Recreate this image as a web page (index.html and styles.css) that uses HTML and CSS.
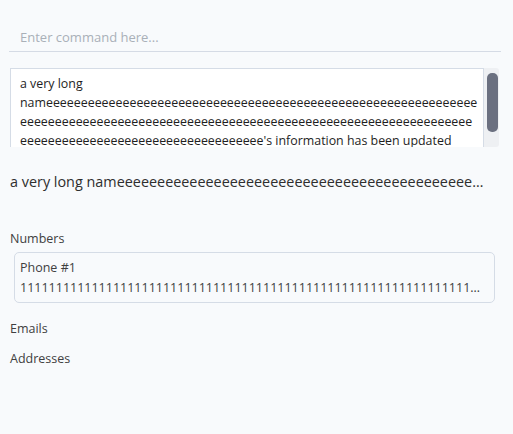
FILE: index.html
```html
<!DOCTYPE html>
<html lang="en">
<head>
<meta charset="utf-8">
<title>Command</title>
<link rel="stylesheet" href="styles.css">
</head>
<body>
<div class="app">
  <input class="cmd" type="text" placeholder="Enter command here...">
  <div class="result">
    <div class="result-box">a very long nameeeeeeeeeeeeeeeeeeeeeeeeeeeeeeeeeeeeeeeeeeeeeeeeeeeeeeeeeeeeeeeeeeeeeeeeeeeeeeeeeeeeeeeeeeeeeeeeeeeeeeeeeeeeeeeeeeeeeeeeeeeeeeeeeeeeeeeeeeeeeeeeeeeeeeeeeeeeeeeeee's information has been updated</div>
    <div class="scroll-track"><div class="scroll-thumb"></div></div>
  </div>
  <div class="title">a very long nameeeeeeeeeeeeeeeeeeeeeeeeeeeeeeeeeeeeeeeeeeeeeeeeeeeeeeeeeeeeeeeeeeeeeeeeeeeeeeeeeeeeeeeeeeeeeeeeeeeeeeeeeeeeeeeeeeeeeeeeeeeeeeeeeeeeeeeeeeeeeeeeeeeeeeeeeeeeeeeeeeeeeeeeeee</div>
  <div class="section">
    <div class="label">Numbers</div>
    <div class="card">
      <div class="card-title">Phone #1</div>
      <div class="card-value">111111111111111111111111111111111111111111111111111111111111111111111111111111111111111111111111111111</div>
    </div>
  </div>
  <div class="label label-gap">Emails</div>
  <div class="label label-gap2">Addresses</div>
</div>
</body>
</html>
```

FILE: styles.css
```css
* { box-sizing: border-box; }
html, body { margin: 0; padding: 0; background: #f8fafc; }
body {
  font-family: "Open Sans", "Noto Sans", sans-serif;
  color: #333;
  width: 513px;
  height: 434px;
}
.app {
  display: flex;
  flex-direction: column;
  padding: 20px 12px 0 9px;
}
.cmd {
  width: 100%;
  height: 32px;
  border: none;
  border-bottom: 1px solid #d5dbe5;
  background: transparent;
  padding: 3px 11px 0 11px;
  font-family: inherit;
  font-size: 13px;
  color: #333;
  outline: none;
}
.cmd::placeholder { color: #a9b0b8; }
.result {
  display: flex;
  margin: 16px 2px 0 1px;
  height: 79px;
}
.result-box {
  flex: 1;
  min-width: 0;
  overflow: hidden;
  background: #fff;
  border: 1px solid #d5dce6;
  border-bottom: none;
  padding: 5px 5px 0 9px;
  font-size: 12.4px;
  line-height: 19px;
  overflow-wrap: anywhere;
  color: #1e1e1e;
}
.scroll-track {
  width: 15px;
  flex: none;
  background: #eef0f3;
  border-radius: 0 3px 3px 0;
  padding: 5px 1px 0 3px;
}
.scroll-thumb {
  height: 59px;
  background: #6b7080;
  border-radius: 5px;
}
.title {
  margin-top: 24px;
  padding-left: 1px;
  padding-right: 12px;
  font-size: 14.4px;
  line-height: 22px;
  color: #2e2e2e;
  white-space: nowrap;
  overflow: hidden;
  text-overflow: ellipsis;
}
.section { margin-top: 37px; }
.label {
  padding-left: 1px;
  font-size: 12.5px;
  line-height: 18px;
  color: #404040;
}
.card {
  margin: 4px 6px 0 5px;
  border: 1px solid #d5dce6;
  border-radius: 5px;
  padding: 5px 8px 4px 5px;
  font-size: 12.5px;
  line-height: 20px;
  color: #404040;
}
.card-value {
  white-space: nowrap;
  overflow: hidden;
  text-overflow: ellipsis;
}
.label-gap { margin-top: 17px; }
.label-gap2 { margin-top: 12px; }
```
